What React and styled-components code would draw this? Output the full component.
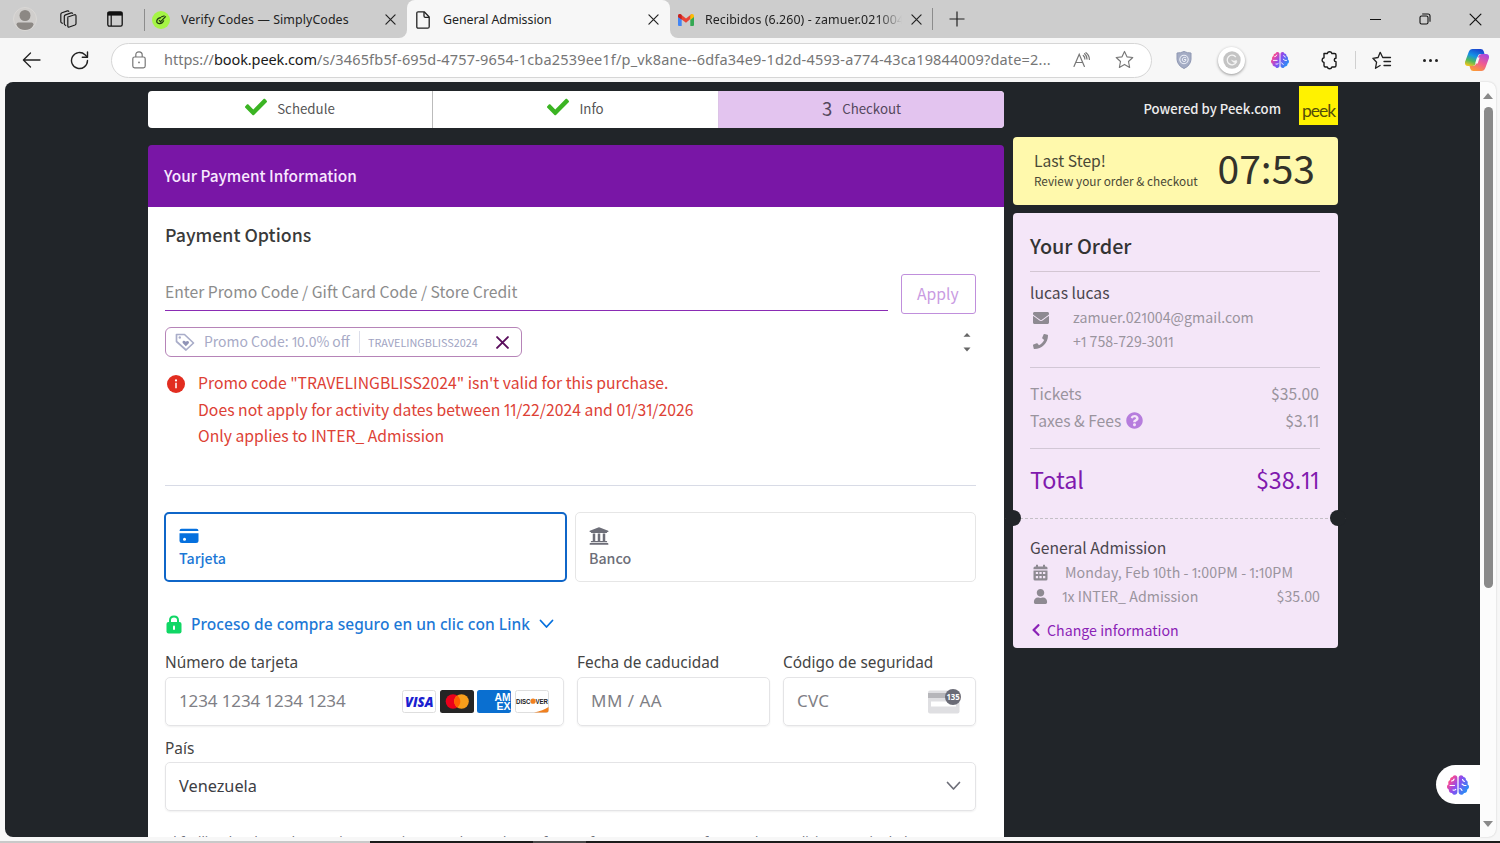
import styled, { createGlobalStyle, css } from 'styled-components';
import { FaBrain, FaCheck, FaChevronLeft, FaEnvelope, FaPhone, FaQuestionCircle, FaUniversity, FaUser } from 'react-icons/fa';

const GlobalStyle = createGlobalStyle`
	* { box-sizing: border-box; }
	body {
		margin: 0;
		background: #f3f3f3;
		overflow: hidden;
	}
`;

// the digit 1 is set narrower than the other figures
const tight = (text) => text.split(/(1)/).map((part, i) => (part === '1' ? <One key={i}>1</One> : part));

/* ---------- icons ---------- */

const WorkspacesIcon = () => (
	<svg width="20" height="20" viewBox="0 0 20 20" fill="none" stroke="#1c1c1c" strokeWidth="1.2" strokeLinejoin="round">
		<path d="M9.2 8.2 16.5 5.8q1.5-.4 1.5 1.2v7.6q0 1-1 1.4l-5.6 2q-1.6.4-1.6-1.1V8.8" />
		<path d="M8.2 16.6 7.5 16.3q-1.2-.4-1.2-1.6V7.6q0-1.3 1.2-1.7l5.6-2q1.2-.3 1.6.9" />
		<path d="M4.8 14.6 3.8 14q-1-.5-1-1.6V5.5q0-1.3 1.2-1.7L9.4 1.9q1.2-.3 1.6.8" />
	</svg>
);

const TabActionsIcon = () => (
	<svg width="16" height="16" viewBox="0 0 16 16">
		<rect x=".8" y=".8" width="14.4" height="14.4" rx="1.6" fill="none" stroke="#111" strokeWidth="1.3" />
		<path d="M.8 1h14.4v3.6H.8z" fill="#111" />
		<path d="M4.2 4v11" stroke="#111" strokeWidth="1.2" />
	</svg>
);

const PersonIcon = () => (
	<svg width="24" height="24" viewBox="0 0 24 24">
		<clipPath id="avatar"><circle cx="12" cy="12" r="11" /></clipPath>
		<circle cx="12" cy="12" r="11.5" fill="#d0cecc" stroke="#dad8d6" />
		<circle cx="12" cy="8.5" r="5.5" fill="#8c8884" />
		<path d="M3.5 17.5q0-2 2-2h13q2 0 2 2-2 6-8.5 6t-8.5-6z" fill="#8c8884" clipPath="url(#avatar)" />
	</svg>
);

const SimplyIcon = () => (
	<svg width="18" height="18" viewBox="0 0 18 18">
		<circle cx="9" cy="9" r="9" fill="#a5f545" />
		<path d="M11.8 9.4q-1.2 3.4-4.600 3.200-2.900-.5-2.400-3 .8-2.600 4.200-2.900M7 9.200l1.600 1.400 5.200-5.200M9 6l3.600-1.200" fill="none" stroke="#1f3a10" strokeWidth="1.2" />
	</svg>
);

const PageIcon = () => (
	<svg width="14" height="18" viewBox="0 0 14 18" fill="none" stroke="#222" strokeWidth="1.3" strokeLinejoin="round">
		<path d="M2.2.8h6L13.2 6v9.7q0 1.5-1.5 1.5H2.3Q.8 17.2.8 15.7V2.3Q.8.8 2.2.8z" />
		<path d="M8 1v4q0 1.3 1.3 1.3H13" />
	</svg>
);

const GmailIcon = () => (
	<svg width="16" height="12" viewBox="0 0 16 12">
		<path d="M0 2v9q0 1 1 1h2.7V4.8z" fill="#4285f4" />
		<path d="M16 2v9q0 1-1 1h-2.7V4.8z" fill="#34a853" />
		<path d="M0 2Q0 0 1.8 0q.6 0 1.2.5l5 3.9L13 .5Q13.6 0 14.2 0l-1.900 5.100L8 8.700 3.700 5.500 0 3z" fill="#ea4335" />
		<path d="M12.300 1.100Q13.200.2 14 .1 16 0 16 2v1l-3.700 3z" fill="#fbbc04" />
		<path d="M0 2Q0 0 1.800 0q1 0 1.900 1.100v4.400L0 3z" fill="#c5221f" />
	</svg>
);

const Cross = ({ size = 12, color = '#222', width = 1.3 }) => (
	<svg width={size} height={size} viewBox="0 0 12 12" stroke={color} strokeWidth={width} strokeLinecap="round">
		<path d="M1 1l10 10M11 1L1 11" />
	</svg>
);

const PlusIcon = () => (
	<svg width="16" height="16" viewBox="0 0 16 16" stroke="#222" strokeWidth="1.2"><path d="M8 .5v15M.5 8h15" /></svg>
);

const RestoreIcon = () => (
	<svg width="12" height="12" viewBox="0 0 12 12" fill="none" stroke="#111" strokeWidth="1.1">
		<rect x="1" y="3" width="8" height="8" rx="1.6" />
		<path d="M3.2 1H9q2 0 2 2v5.8" />
	</svg>
);

const BackIcon = () => (
	<svg width="19" height="16" viewBox="0 0 19 16" fill="none" stroke="#222" strokeWidth="1.3" strokeLinecap="round" strokeLinejoin="round">
		<path d="M18 8H1.5M8.5 1L1.4 8l7.1 7" />
	</svg>
);

const ReloadIcon = () => (
	<svg width="19" height="19" viewBox="0 0 19 19" fill="none" stroke="#222" strokeWidth="1.4" strokeLinecap="round" strokeLinejoin="round">
		<path d="M17.5 9.5A8 8 0 1 1 15 3.7L17.3 6" />
		<path d="M17.5 1v5.2h-5.2" />
	</svg>
);

const LockIcon = () => (
	<svg width="14" height="18" viewBox="0 0 14 18" fill="none" stroke="#777" strokeWidth="1.2">
		<rect x=".8" y="6" width="12.4" height="10.8" rx="1.8" />
		<path d="M3.8 6V4Q3.8.9 7 .9T10.2 4v2" />
		<circle cx="7" cy="11.4" r=".9" fill="#777" stroke="none" />
	</svg>
);

const StarIcon = () => (
	<svg width="19" height="19" viewBox="0 0 20 20" fill="none" stroke="#777" strokeWidth="1.2" strokeLinejoin="round">
		<path d="M10 1.5l2.6 5.7 6.1.7-4.5 4.2 1.2 6.2L10 15.2l-5.400 3.100 1.200-6.200L1.300 7.900l6.100-.7z" />
	</svg>
);

const ReadAloudIcon = () => (
	<svg width="18" height="16" viewBox="0 0 18 16" fill="none" stroke="#777" strokeWidth="1.2" strokeLinecap="round">
		<path d="M1 14.5L6.2 2.2l5.2 12.300M2.800 10.500h6.800" />
		<path d="M10.3 3.5q1.6 1.5 1.6 3.6M11.600 1.700q2.400 2 2.400 5.400M13 .7q3.300 2.300 3.400 6.800" />
	</svg>
);

const ShieldIcon = () => (
	<svg width="16" height="18" viewBox="0 0 16 18">
		<path d="M8 .5q3.500 1.600 7 1.500v6.500Q14.500 14.500 8 17.500 1.500 14.500 1 8.500V2Q4.500 2.100 8 .5z" fill="#a4acc4" stroke="#8f98b3" />
		<circle cx="8" cy="8.5" r="4.2" fill="none" stroke="#edf0f8" strokeWidth="1.1" />
		<path d="M10.200 6.800Q8 5.500 6.400 7.500q-.8 2.800 1.600 3.100 2.200-.2 2-2.100H8" fill="none" stroke="#edf0f8" />
	</svg>
);

const CircleCIcon = () => (
	<svg width="18" height="18" viewBox="0 0 18 18">
		<circle cx="9" cy="9" r="8.7" fill="#c4c4c4" />
		<path d="M12.800 6A4.800 4.800 0 1 0 13.300 11.200q-2.600.3-3.600-1.200 2.200 1 4-.6" fill="none" stroke="#f4f4f4" strokeWidth="1.3" />
	</svg>
);

const PuzzleIcon = () => (
	<svg width="18" height="20" viewBox="0 0 18 20" fill="none" stroke="#1a1a1a" strokeWidth="1.4" strokeLinejoin="round">
		<path d="M4 3.500h3.300a2.400 2.400 0 0 1 4.600 0h2.600q1.500 0 1.500 1.500v3.300a1.700 1.700 0 0 0 0 3.500v3.700q0 1.500-1.500 1.500h-2.600a2.400 2.400 0 0 1-4.600 0H5.500Q4 17 4 15.500v-3a2.400 2.400 0 0 1 0-4.700z" />
	</svg>
);

const FavoritesIcon = () => (
	<svg width="20" height="19" viewBox="0 0 20 19" fill="none" stroke="#222" strokeWidth="1.3" strokeLinejoin="round" strokeLinecap="round">
		<path d="M8.100 14.500l-4.600 2.800 1.100-6.100L.9 7.300l5.200-.8L8.200 1.300l2.500 5.200h7.800M12 10.500h6.500M12 14.500h6.500" />
	</svg>
);

const CopilotIcon = () => (
	<svg width="26" height="24" viewBox="0 0 26 24">
		<defs>
			<linearGradient id="cpA" x1=".6" y1="0" x2=".2" y2="1">
				<stop offset="0" stopColor="#1b48d0" /><stop offset=".4" stopColor="#1593e6" /><stop offset=".7" stopColor="#4fb95c" /><stop offset="1" stopColor="#f4c51c" />
			</linearGradient>
			<linearGradient id="cpB" x1=".8" y1="0" x2=".3" y2="1">
				<stop offset="0" stopColor="#a84be0" /><stop offset=".5" stopColor="#ef5a94" /><stop offset="1" stopColor="#fb9a38" />
			</linearGradient>
		</defs>
		<path d="M8.500 1h8.200q2.300 0 3 2.200L20.500 6h-3.700q-2.400 0-3.100 2.400l-2 7Q11 18 8.500 18H4Q.5 18 1 14L4.700 4Q5.800 1 8.500 1z" fill="url(#cpA)" />
		<path d="M17.500 23H9.300Q7 23 6.300 20.800L5.500 18h3.700q2.400 0 3.100-2.400l2-7Q15 6 17.500 6H22q3.500 0 3 4l-3.700 10q-1.100 3-3.800 3z" fill="url(#cpB)" />
		<path d="M13 9.500h2.600l-1.900 6h-2.600z" fill="#f7f7f7" />
	</svg>
);

const TagIcon = () => (
	<svg width="20" height="20" viewBox="0 0 20 20">
		<path d="M1.500 2.500h8L18.500 11 11 18 1.500 9.500z" fill="none" stroke="#a9adc9" strokeWidth="1.7" strokeLinejoin="round" />
		<circle cx="4.8" cy="5.5" r="1.2" fill="#a9adc9" />
		<path d="M10.800 14.300L7.700 11.100q-.8-1.600.7-2.300 1.400-.4 2.300 1 1.300-1.400 2.700-.6 1.200 1 .2 2.300z" fill="#8f93b6" />
	</svg>
);

const InfoIcon = () => (
	<svg width="18" height="18" viewBox="0 0 18 18">
		<circle cx="9" cy="9" r="9" fill="#e22d20" />
		<circle cx="9" cy="5.4" r="1.1" fill="#fff" />
		<path d="M9 7.700v5.600" stroke="#fff" strokeWidth="1.5" />
	</svg>
);

const CardIcon = () => (
	<svg width="20" height="16" viewBox="0 0 20 16">
		<path d="M.5 3Q.5.8 2.500.8h15q2 0 2 2.200z" fill="#0570de" />
		<path d="M.5 5.200h19v7.300q0 2.500-2.500 2.500H3Q.5 15 .5 12.500z" fill="#0570de" />
		<circle cx="5.5" cy="11.3" r="1.5" fill="#fff" />
	</svg>
);

const SecureIcon = () => (
	<svg width="16" height="19" viewBox="0 0 16 19">
		<path d="M4 8V5.200Q4 1.500 8 1.500t4 3.700V8" fill="none" stroke="#10d765" strokeWidth="2" />
		<rect x=".5" y="7" width="15" height="11.5" rx="2" fill="#10d765" />
		<rect x="7" y="10.5" width="2" height="4.5" rx="1" fill="#fff" />
	</svg>
);

const ChevronDown = ({ color, width = 1.8 }) => (
	<svg width="15" height="10" viewBox="0 0 15 10" fill="none" stroke={color} strokeWidth={width} strokeLinecap="round" strokeLinejoin="round">
		<path d="M1.500 1.500l6 6.500 6-6.500" />
	</svg>
);

const VisaLogo = () => (
	<svg width="34" height="23" viewBox="0 0 34 23">
		<rect x=".5" y=".5" width="33" height="22" rx="2" fill="#fff" stroke="#dedede" />
		<text x="3" y="16.5" textLength="28.5" lengthAdjust="spacingAndGlyphs" fontFamily="Open Sans, sans-serif" fontSize="13.5" fontWeight="800" fontStyle="italic" fill="#1a20d0">VISA</text>
	</svg>
);

const MastercardLogo = () => (
	<svg width="34" height="23" viewBox="0 0 34 23">
		<rect width="34" height="23" rx="2.5" fill="#252525" />
		<circle cx="13" cy="11.5" r="7.3" fill="#eb001b" />
		<circle cx="21.5" cy="11.5" r="7.3" fill="#f79e1b" />
		<path d="M17.250 5.560a7.300 7.300 0 0 1 0 11.880 7.300 7.300 0 0 1 0-11.880z" fill="#ff5f00" />
	</svg>
);

const AmexLogo = () => (
	<svg width="34" height="23" viewBox="0 0 34 23">
		<rect width="34" height="23" rx="2.5" fill="#0a6fd0" />
		<g fill="#fff" fontFamily="Liberation Sans, sans-serif" fontWeight="700" fontSize="10.5">
			<text x="17.5" y="11" textLength="16" lengthAdjust="spacingAndGlyphs">AM</text>
			<text x="19.5" y="19.8" textLength="14" lengthAdjust="spacingAndGlyphs">EX</text>
		</g>
	</svg>
);

const DiscoverLogo = () => (
	<svg width="34" height="23" viewBox="0 0 34 23">
		<rect x=".5" y=".5" width="33" height="22" rx="2" fill="#fff" stroke="#dedede" />
		<path d="M19 22.500q9-2 14.500-5.500v3.500q0 2-2 2z" fill="#f08020" />
		<g fontFamily="Liberation Sans, sans-serif" fontWeight="700" fontSize="6.5" fill="#222">
			<text x="1" y="13.6" textLength="14.5" lengthAdjust="spacingAndGlyphs">DISC</text>
			<text x="20.5" y="13.6" textLength="12.5" lengthAdjust="spacingAndGlyphs">VER</text>
		</g>
		<circle cx="18" cy="11.2" r="2.6" fill="#f08020" />
	</svg>
);

const CvcIcon = () => (
	<svg width="34" height="26" viewBox="0 0 34 26">
		<rect x="1" y="2.5" width="31.5" height="23" rx="2" fill="#dfdfe2" />
		<path d="M1 5h31v5H1z" fill="#b6b6ba" />
		<rect x="4" y="13.5" width="25" height="5" fill="#fff" />
		<circle cx="26" cy="9" r="8" fill="#6a6b76" />
		<text x="19.4" y="12.3" textLength="13.4" lengthAdjust="spacingAndGlyphs" fontFamily="Noto Sans, sans-serif" fontSize="9.5" fontWeight="700" fill="#fff">135</text>
	</svg>
);

const CalendarIcon = () => (
	<svg width="15" height="17" viewBox="0 0 15 17">
		<path d="M4 .8v3M11 .8v3" stroke="#8e8a92" strokeWidth="2" />
		<path d="M.5 4q0-1.600 1.600-1.600h10.800q1.600 0 1.600 1.600v1.200H.5z" fill="#8e8a92" />
		<path d="M.5 6.400h14v8.500q0 1.600-1.600 1.600H2.100q-1.600 0-1.600-1.600zM2.800 8v2h2.300V8zm3.600 0v2h2.300V8zM10 8v2h2.300V8zM2.800 12v2.200h2.300V12zm3.600 0v2.200h2.300V12zM10 12v2.200h2.300V12z" fill="#8e8a92" fillRule="evenodd" />
	</svg>
);

const BrainIcon = ({ size, id }) => (
	<BrainBox>
		<svg width="0" height="0">
			<linearGradient id={id} x1="0" y1="0" x2="1" y2=".6">
				<stop offset="0" stopColor="#ff8a3c" />
				<stop offset=".25" stopColor="#f0479c" />
				<stop offset=".55" stopColor="#8a4df0" />
				<stop offset="1" stopColor="#2b8cf5" />
			</linearGradient>
		</svg>
		<FaBrain size={size} fill={`url(#${id})`} />
		<BrainFolds width={size} height={size} viewBox="0 0 22 22">
			<path d="M3 11.500h4.500M4.500 7q2 0 2.600-2M6 16q1.500.6 2.800-.6M19 11.500h-2l-2-1.500M17.500 7.500q-1.500-.3-2-2M15 16.500q-.6-1.600-2-2" />
		</BrainFolds>
	</BrainBox>
);

/* ---------- page ---------- */

const CARD_LOGOS = [VisaLogo, MastercardLogo, AmexLogo, DiscoverLogo];

const App = () => {
	return (
		<Browser>
			<GlobalStyle />
			<TabStrip>
				<StripTools>
					<PersonIcon />
					<WorkspacesIcon />
					<TabActionsIcon />
				</StripTools>
				<Tab $edge="left">
					<SimplyIcon />
					<TabTitle>Verify Codes — SimplyCodes</TabTitle>
					<Cross size={11} />
				</Tab>
				<Tab $active>
					<PageIcon />
					<TabTitle $wide>General Admission</TabTitle>
					<Cross size={11} />
				</Tab>
				<Tab $edge="right">
					<GmailIcon />
					<TabTitle $faded>Recibidos (6.260) - zamuer.021004</TabTitle>
					<Cross size={11} />
				</Tab>
				<NewTab><PlusIcon /></NewTab>
				<WindowButtons>
					<MinimizeBar />
					<RestoreIcon />
					<Cross size={13} color="#111" width={1.1} />
				</WindowButtons>
			</TabStrip>

			<Toolbar>
				<NavButtons>
					<BackIcon />
					<ReloadIcon />
				</NavButtons>
				<AddressBar>
					<LockIcon />
					<Url>
						<UrlPart $track="0">https://</UrlPart>
						<UrlPart $host $track="-0.1px">book.peek.com</UrlPart>
						<UrlPart $track="0.18px">/s/3465fb5f-695d-4757-9654-1cba2539ee1f/p_vk8ane--6dfa34e9-1d2d-4593-a774-43ca19844009?date=2...</UrlPart>
					</Url>
					<ReadAloudIcon />
					<StarIcon />
				</AddressBar>
				<Extensions>
					<ShieldIcon />
					<RoundExtension><CircleCIcon /></RoundExtension>
					<BrainIcon size={18} id="brainBar" />
					<PuzzleIcon />
					<ToolbarRule />
					<FavoritesIcon />
					<Dots><i /><i /><i /></Dots>
					<CopilotIcon />
				</Extensions>
			</Toolbar>

			<Body>
				<Page>
					<Main>
						<Stepper>
							<Step><FaCheck size={22} color="#3bb423" /><span>Schedule</span></Step>
							<Step><FaCheck size={22} color="#3bb423" /><span>Info</span></Step>
							<Step $current><StepNumber>3</StepNumber><span>Checkout</span></Step>
						</Stepper>
						<Panel>
							<PanelHeader>Your Payment Information</PanelHeader>
							<PanelBody>
								<SectionTitle>Payment Options</SectionTitle>
								<PromoRow>
									<PromoInput>Enter Promo Code / Gift Card Code / Store Credit</PromoInput>
									<ApplyButton>Apply</ApplyButton>
								</PromoRow>
								<ChipRow>
									<Chip>
										<TagIcon />
										<ChipLabel>{tight('Promo Code: 10.0% off')}</ChipLabel>
										<ChipCode>TRAVELINGBLISS2024</ChipCode>
										<Cross size={13} color="#5a0d5c" width={1.8} />
									</Chip>
									<Spinner>
										<svg width="8" height="20" viewBox="0 0 8 20" fill="#666">
											<path d="M.5 4.800L4 1l3.500 3.800zM.5 15.600L4 19.400l3.500-3.800z" />
										</svg>
									</Spinner>
								</ChipRow>
								<ErrorBox>
									<InfoIcon />
									<div>
										<ErrorLine>Promo code "TRAVELINGBLISS2024" isn't valid for this purchase.</ErrorLine>
										<ErrorLine $track={0.03}>{tight('Does not apply for activity dates between 11/22/2024 and 01/31/2026')}</ErrorLine>
										<ErrorLine>Only applies to INTER_ Admission</ErrorLine>
									</div>
								</ErrorBox>
								<Methods>
									<Method $selected>
										<CardIcon />
										<span>Tarjeta</span>
									</Method>
									<Method>
										<FaUniversity size={20} />
										<span>Banco</span>
									</Method>
								</Methods>
								<LinkRow>
									<SecureIcon />
									<LinkText>Proceso de compra seguro en un clic con Link</LinkText>
									<ChevronDown color="#0570de" />
								</LinkRow>
								<Fields>
									<Field>
										<Label>Número de tarjeta</Label>
										<Input>
											<Placeholder>1234 1234 1234 1234</Placeholder>
											<Cards>{CARD_LOGOS.map((Logo, i) => <Logo key={i} />)}</Cards>
										</Input>
									</Field>
									<Field>
										<Label>Fecha de caducidad</Label>
										<Input><Placeholder $track={0.5}>MM / AA</Placeholder></Input>
									</Field>
									<Field>
										<Label>Código de seguridad</Label>
										<Input><Placeholder $track={0.3}>CVC</Placeholder><CvcIcon /></Input>
									</Field>
								</Fields>
								<Field $spaced>
									<Label $short>País</Label>
									<Input><Value>Venezuela</Value><ChevronDown color="#6d6e78" width={1.7} /></Input>
								</Field>
								<Terms>Al facilitar los datos de tu tarjeta, permites a Peek Travel Inc. efectuar futuros cargos conforme a las condiciones estipuladas.</Terms>
							</PanelBody>
						</Panel>
					</Main>

					<Sidebar>
						<Powered>
							<span>Powered by Peek.com</span>
							<PeekLogo>peek</PeekLogo>
						</Powered>
						<TimerCard>
							<div>
								<TimerTitle>Last Step!</TimerTitle>
								<TimerNote>Review your order &amp; checkout</TimerNote>
							</div>
							<Clock>07:53</Clock>
						</TimerCard>
						<Order>
							<OrderTitle>Your Order</OrderTitle>
							<Block $height={96} $top={11}>
								<Name>lucas lucas</Name>
								<Detail $indent={43}><IconBox><FaEnvelope size={16} /></IconBox><span>{tight('zamuer.021004@gmail.com')}</span></Detail>
								<Detail $indent={43}><IconBox><FaPhone size={15} /></IconBox><span>{tight('+1 758-729-3011')}</span></Detail>
							</Block>
							<Block $height={81} $top={13}>
								<Line><span>Tickets</span><Amount>{tight('$35.00')}</Amount></Line>
								<Line><span>Taxes &amp; Fees <FaQuestionCircle size={17} color="#b67ddd" /></span><Amount>{tight('$3.11')}</Amount></Line>
							</Block>
							<Total><span>Total</span><Amount>{tight('$38.11')}</Amount></Total>
							<Perforation />
							<Booking>
								<Name>General Admission</Name>
								<Detail $indent={35} $track={0.07}><IconBox><CalendarIcon /></IconBox><span>{tight('Monday, Feb 10th - 1:00PM - 1:10PM')}</span></Detail>
								<Detail $indent={32}><IconBox><FaUser size={15} /></IconBox><span>{tight('1x INTER_ Admission')}</span><Price>{tight('$35.00')}</Price></Detail>
								<Change><FaChevronLeft size={14} /><span>Change information</span></Change>
							</Booking>
						</Order>
					</Sidebar>
					<FloatingButton><BrainIcon size={22} id="brainFloat" /></FloatingButton>
				</Page>
				<Scrollbar>
					<svg width="10" height="6" viewBox="0 0 10 6"><path d="M0 6L5 0l5 6z" fill="#8a8a8a" /></svg>
					<Thumb />
					<svg width="10" height="6" viewBox="0 0 10 6"><path d="M0 0l5 6 5-6z" fill="#8a8a8a" /></svg>
				</Scrollbar>
			</Body>
			<BottomEdge />
		</Browser>
	);
};

const sans = css`font-family: 'Noto Sans CJK JP', 'Open Sans', sans-serif;`;
const ui = css`font-family: 'Noto Sans', 'Open Sans', sans-serif;`;

const One = styled.span`
	margin: 0 -0.13em 0 -0.06em;
	line-height: 0;
	${ui}
`;

const BrainBox = styled.span`
	position: relative;
	display: flex;
`;

const BrainFolds = styled.svg`
	position: absolute;
	inset: 0;
	fill: none;
	stroke: #fff;
	stroke-width: 1.1;
	stroke-linecap: round;
`;

const Browser = styled.div`
	display: flex;
	flex-direction: column;
	width: 1500px;
	height: 843px;
	overflow: hidden;
	background: #f7f7f7;
	white-space: nowrap;
	svg { flex: none; }
`;

const TabStrip = styled.div`
	display: flex;
	height: 38px;
	background: #f7f7f7;
	${ui}
`;

const StripTools = styled.div`
	display: flex;
	align-items: center;
	width: 144px;
	padding-left: 13px;
	background: #cdcdcd;
	svg:nth-child(2) { margin-left: 21px; }
	svg:nth-child(3) { margin-left: 29px; }
`;

const Tab = styled.div`
	display: flex;
	align-items: center;
	width: 263px;
	padding: 1px 11px 0 8px;
	background: #cdcdcd;
	${({ $edge }) => $edge === 'left' && css`
		border-radius: 0 0 8px 0;
		&::before {
			content: '';
			width: 1px;
			height: 22px;
			margin: 0 7px 0 -8px;
			background: #8c8c8c;
		}
	`}
	${({ $edge }) => $edge === 'right' && css`
		border-radius: 0 0 0 8px;
		padding-right: 11px;
	`}
	${({ $active }) => $active && css`
		padding: 1px 11px 0 9px;
		border-radius: 8px 8px 0 0;
		background: #f7f7f7;
		box-shadow: 0 -8px 0 0 #cdcdcd;
	`}
`;

const TabTitle = styled.div`
	flex: 1;
	margin-left: ${({ $wide }) => ($wide ? 13 : 11)}px;
	margin-right: ${({ $faded }) => ($faded ? 9 : 24)}px;
	overflow: hidden;
	color: #222;
	font-size: 12.4px;
	letter-spacing: ${({ $wide }) => ($wide ? -0.05 : 0.08)}px;
	line-height: 19px;
	${({ $faded }) => $faded && css`
		mask-image: linear-gradient(90deg, #000 88%, transparent);
	`}
`;

const NewTab = styled.div`
	display: flex;
	align-items: center;
	width: 60px;
	background: #cdcdcd;
	&::before {
		content: '';
		width: 1px;
		height: 22px;
		margin: 0 16px 0 -1px;
		background: #8c8c8c;
	}
`;

const WindowButtons = styled.div`
	display: flex;
	flex: 1;
	align-items: center;
	justify-content: flex-end;
	gap: 38px;
	padding-right: 18px;
	background: #cdcdcd;
`;

const MinimizeBar = styled.div`
	width: 11px;
	height: 1px;
	background: #111;
`;

const Toolbar = styled.div`
	display: flex;
	align-items: center;
	height: 44px;
	${ui}
`;

const NavButtons = styled.div`
	display: flex;
	flex: none;
	align-items: center;
	gap: 29px;
	width: 111px;
	padding-left: 22px;
`;

const AddressBar = styled.div`
	display: flex;
	flex: none;
	align-items: center;
	width: 1041px;
	height: 35px;
	padding: 0 17px 1px 20px;
	border: 1px solid #d6d6d6;
	border-radius: 18px;
	background: #fff;
	svg + svg { margin-left: 24px; }
`;

const Url = styled.div`
	flex: 1;
	margin-left: 18px;
	padding-bottom: 1px;
	font-size: 14.5px;
	line-height: 20px;
`;

const UrlPart = styled.span`
	color: ${({ $host }) => ($host ? '#1a1a1a' : '#767676')};
	letter-spacing: ${({ $track }) => $track};
`;

const Extensions = styled.div`
	display: grid;
	grid-template-columns: 48px 47px 49px 50px 3px 50px 46px 47px;
	align-items: center;
	justify-items: center;
	margin-left: 8px;
`;

const RoundExtension = styled.div`
	display: flex;
	align-items: center;
	justify-content: center;
	width: 27px;
	height: 27px;
	border-radius: 50%;
	background: #fff;
	box-shadow: 0 1px 3px #0006;
`;

const ToolbarRule = styled.div`
	width: 1px;
	height: 18px;
	background: #d0d0d0;
`;

const Dots = styled.div`
	display: flex;
	gap: 3px;
	i {
		width: 3px;
		height: 3px;
		border-radius: 50%;
		background: #222;
	}
`;

const Body = styled.div`
	display: flex;
	height: 755px;
	padding: 0 4px 0 5px;
`;

const Page = styled.div`
	position: relative;
	display: flex;
	gap: 9px;
	width: 1475px;
	padding-left: 143px;
	overflow: hidden;
	border-radius: 8px 0 0 8px;
	background: #212529;
	${sans}
`;

const Scrollbar = styled.div`
	display: flex;
	flex-direction: column;
	align-items: center;
	width: 16px;
	padding: 11px 0 10px;
	border-radius: 0 8px 8px 0;
	background: #fcfcfc;
	box-shadow: 0 0 2px #0003;
`;

const Thumb = styled.div`
	width: 9px;
	height: 481px;
	margin: 8px 0 auto;
	border-radius: 5px;
	background: #8a8a8a;
`;

const BottomEdge = styled.div`
	height: 2px;
	margin-top: 4px;
	background: linear-gradient(90deg, #c9c9c9 370px, #1b1b1b 370px, #1b1b1b 533px, #4a4a4a 533px, #4a4a4a 586px, #1b1b1b 586px);
`;

const Main = styled.div`
	width: 856px;
	padding-top: 9px;
`;

const Stepper = styled.div`
	display: grid;
	grid-template-columns: 284px 286px 286px;
	height: 37px;
	overflow: hidden;
	border-radius: 4px;
	background: #fff;
`;

const Step = styled.div`
	display: flex;
	align-items: center;
	justify-content: center;
	gap: 10px;
	color: #555;
	font-size: 13.3px;
	line-height: 20px;
	border-left: 1px solid #bbb;
	&:first-child { border-left: 0; }
	svg { margin-top: -5px; }
	span { padding-bottom: 2px; }
	${({ $current }) => $current && css`
		border-color: #dcc3e6;
		background: #e3c4ef;
		color: #54475c;
	`}
`;

const StepNumber = styled.b`
	font-size: 18.5px;
	font-weight: 400;
	padding-bottom: 4px;
`;

const Panel = styled.div`
	margin-top: 17px;
	overflow: hidden;
	border-radius: 4px 4px 0 0;
	background: linear-gradient(#7916a6 62px, #fff 62px);
`;

const PanelHeader = styled.div`
	height: 62px;
	padding-left: 16px;
	color: #f8e8ff;
	font-size: 15.35px;
	font-weight: 500;
	line-height: 60px;
`;

const PanelBody = styled.div`
	height: 700px;
	padding: 15px 28px 0 17px;
`;

const SectionTitle = styled.div`
	height: 52px;
	color: #3a3a3a;
	font-size: 17.75px;
	font-weight: 500;
	line-height: 24px;
`;

const PromoRow = styled.div`
	display: flex;
	justify-content: space-between;
	height: 39px;
`;

const PromoInput = styled.div`
	width: 723px;
	height: 37px;
	border-bottom: 1px solid #8a2cb4;
	color: #8c8c8c;
	font-size: 15.7px;
	line-height: 35px;
`;

const ApplyButton = styled.div`
	width: 75px;
	height: 40px;
	border: 1px solid #c08fdc;
	border-radius: 3px;
	color: #c99be2;
	font-size: 15.7px;
	line-height: 37px;
	padding-left: 15px;
`;

const ChipRow = styled.div`
	display: flex;
	justify-content: space-between;
	height: 43px;
	padding-top: 14px;
`;

const Chip = styled.div`
	display: flex;
	align-items: center;
	width: 357px;
	height: 30px;
	padding-left: 9px;
	border: 1px solid #b684b8;
	border-radius: 6px;
	line-height: 20px;
`;

const ChipLabel = styled.div`
	width: 156px;
	margin: 0 8px 0 9px;
	padding-bottom: 2px;
	border-right: 1px solid #dcdeea;
	color: #a7aac6;
	font-size: 13.95px;
`;

const ChipCode = styled.div`
	width: 128px;
	color: #a0a3c2;
	font-size: 10.85px;
`;

const Spinner = styled.div`
	width: 13px;
	padding-top: 5px;
`;

const ErrorBox = styled.div`
	display: flex;
	gap: 13px;
	height: 130px;
	padding: 14px 0 0 2px;
	border-bottom: 1px solid #d8dbe6;
	svg { margin-top: 5px; }
`;

const ErrorLine = styled.div`
	color: #dd4135;
	font-size: 15.73px;
	letter-spacing: ${({ $track = 0 }) => $track}px;
	line-height: 26.5px;
`;

const Methods = styled.div`
	display: grid;
	grid-template-columns: 403px 401px;
	gap: 8px;
	margin: 26px -1px 0 -1px;
`;

const Method = styled.div`
	display: flex;
	flex-direction: column;
	align-items: flex-start;
	height: 70px;
	padding: 13px 13px 0;
	border: 1px solid #e6e6e6;
	border-radius: 5px;
	color: #6d6e78;
	font-size: 14.2px;
	font-weight: 500;
	line-height: 20px;
	svg { height: 20px; }
	span { margin-top: 2px; }
	${({ $selected }) => $selected && css`
		border: 2px solid #0f66c8;
		padding: 12px 13px 0;
		color: #1c78d6;
	`}
`;

const LinkRow = styled.div`
	display: flex;
	align-items: center;
	gap: 9px;
	height: 26px;
	margin: 29px 0 14px 1px;
`;

const LinkText = styled.div`
	color: #1c78d6;
	font-size: 15.5px;
	font-weight: 500;
	letter-spacing: 0.05px;
	line-height: 24px;
	${ui}
`;

const Fields = styled.div`
	display: grid;
	grid-template-columns: 399px 193px 193px;
	gap: 13px;
`;

const Field = styled.div`
	margin-top: ${({ $spaced }) => ($spaced ? 11 : 0)}px;
	${ui}
`;

const Label = styled.div`
	height: ${({ $short }) => ($short ? 25 : 26)}px;
	color: #444;
	font-size: 15.4px;
	line-height: 23px;
`;

const Input = styled.div`
	display: flex;
	align-items: center;
	justify-content: space-between;
	height: 49px;
	padding: 0 14px 1px 13px;
	border: 1px solid #e4e4e6;
	border-radius: 5px;
	box-shadow: 0 1px 2px #00000010;
`;

const Placeholder = styled.div`
	color: #7f7f86;
	font-size: 17px;
	letter-spacing: ${({ $track = -0.12 }) => $track}px;
	line-height: 24px;
`;

const Value = styled.div`
	color: #3c3d44;
	font-size: 16.3px;
	line-height: 24px;
`;

const Cards = styled.div`
	display: flex;
	gap: 3.7px;
`;

const Terms = styled.div`
	margin-top: 20px;
	color: #6d6e78;
	font-size: 13px;
	line-height: 20px;
	${ui}
`;

const Sidebar = styled.div`
	width: 325px;
`;

const Powered = styled.div`
	display: flex;
	justify-content: flex-end;
	height: 55px;
	padding-top: 4px;
	color: #ededee;
	font-size: 13.1px;
	font-weight: 500;
	line-height: 45px;
`;

const PeekLogo = styled.div`
	width: 39px;
	height: 39px;
	margin-left: 18px;
	background: #fff200;
	color: #544e08;
	font-family: Lato, sans-serif;
	font-size: 17.5px;
	font-weight: 400;
	letter-spacing: -1px;
	line-height: 49px;
	text-align: center;
`;

const TimerCard = styled.div`
	display: flex;
	justify-content: space-between;
	height: 68px;
	padding: 13px 23px 0 21px;
	border-radius: 4px;
	background: #fff9ac;
	color: #4a4836;
`;

const TimerTitle = styled.div`
	font-size: 15.7px;
	line-height: 22px;
`;

const TimerNote = styled.div`
	font-size: 11.8px;
	line-height: 17px;
`;

const Clock = styled.div`
	color: #33322a;
	font-size: 39px;
	line-height: 34px;
`;

const Order = styled.div`
	height: 435px;
	margin-top: 8px;
	padding: 20px 18px 0 17px;
	border-radius: 4px;
	background: #f4e6f8;
`;

const OrderTitle = styled.div`
	height: 39px;
	border-bottom: 1px solid #d3c6d3;
	color: #333;
	font-size: 19.8px;
	font-weight: 500;
	line-height: 26px;
`;

const Block = styled.div`
	height: ${({ $height }) => $height}px;
	padding-top: ${({ $top }) => $top}px;
	border-bottom: 1px solid #d2c7d6;
`;

const Name = styled.div`
	height: 23px;
	color: #4a454d;
	font-size: 15.7px;
	line-height: 20px;
`;

const Detail = styled.div`
	display: grid;
	grid-template-columns: ${({ $indent }) => $indent}px auto 1fr;
	align-items: center;
	height: 23.5px;
	color: #9a949e;
	font-size: 14.2px;
	letter-spacing: ${({ $track = 0.02 }) => $track}px;
	line-height: 21px;
`;

const IconBox = styled.div`
	display: flex;
	justify-content: center;
	width: 21px;
	color: #8e8a92;
`;

const Price = styled.div`
	text-align: right;
`;

const Amount = styled.span`
	margin-right: 1px;
`;

const Line = styled.div`
	display: flex;
	justify-content: space-between;
	height: 26.5px;
	color: #9a949e;
	font-size: 15.7px;
	line-height: 25px;
	svg {
		margin-left: 1px;
		vertical-align: -2px;
	}
`;

const Total = styled.div`
	display: flex;
	justify-content: space-between;
	height: 70px;
	color: #8019ae;
	font-size: 23.3px;
	line-height: 61px;
`;

const Perforation = styled.div`
	display: flex;
	align-items: center;
	justify-content: space-between;
	height: 16px;
	margin: -9px -26px -6px -25px;
	background: repeating-linear-gradient(90deg, #c3bfc6 0 3px, transparent 3px 5px) 0 8px / 100% 1px no-repeat;
	&::before, &::after {
		content: '';
		width: 16px;
		height: 16px;
		border-radius: 50%;
		background: #212529;
	}
`;

const Booking = styled.div`
	padding-top: 18px;
`;

const Change = styled.div`
	display: flex;
	align-items: center;
	gap: 3px;
	margin: 11px 0 0 -1px;
	color: #8a22b6;
	font-size: 14.2px;
	line-height: 22px;
	span { margin-left: 1px; }
`;

const FloatingButton = styled.div`
	position: absolute;
	top: 683px;
	right: 0;
	display: flex;
	align-items: center;
	width: 44px;
	height: 39px;
	padding-left: 11px;
	border-radius: 20px 0 0 20px;
	background: #fff;
`;

export default App;
